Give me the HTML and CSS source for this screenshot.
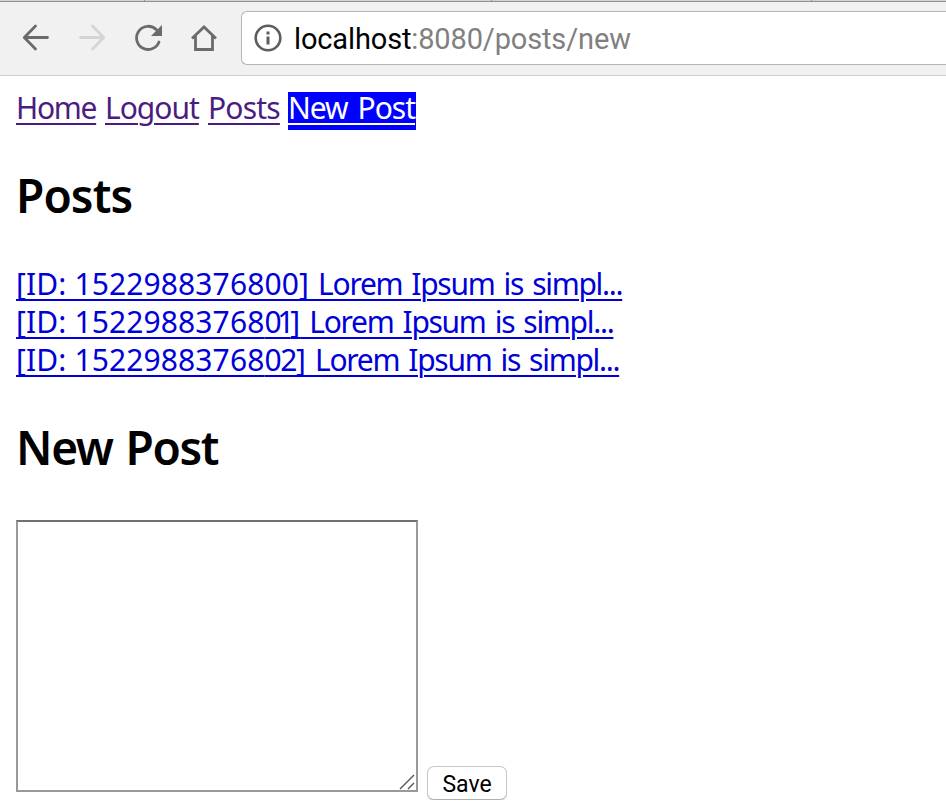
FILE: index.html
```html
<!DOCTYPE html>
<html lang="en">
<head>
<meta charset="utf-8">
<title>New Post</title>
<link rel="stylesheet" href="styles.css">
</head>
<body>
<header class="toolbar">
  <div class="tabs-edge"><i></i><i></i><i></i></div>
  <div class="bar">
    <svg class="controls" width="240" height="73" viewBox="0 2 240 73" fill="none" stroke="#6b6b6b" stroke-width="2.8" stroke-linecap="round" stroke-linejoin="round">
      <path d="M47.5 37.5H24.5M35.5 26L24.3 37.5L35.5 49"/>
      <path stroke="#d5d5d5" d="M80.5 37.5H103.500M92.500 26L103.700 37.500L92.500 49"/>
      <path d="M159 42A11.600 11.600 0 1 1 156.500 29.800"/>
      <path fill="#6b6b6b" stroke="none" d="M162 25V36H151Z"/>
      <path stroke-linecap="butt" stroke-linejoin="miter" d="M192 38.500L204 27L216 38.500M195.500 36V49.500H212.500V36"/>
    </svg>
    <div class="address">
      <svg width="28" height="28" viewBox="0 0 28 28" fill="none" stroke="#5d5d5d">
        <circle cx="14" cy="14" r="12.300" stroke-width="2.600"/>
        <path stroke-width="3" d="M14 7.500V10.500M14 12.500V20.500"/>
      </svg>
      <span class="url"><b>localhost</b>:8080/posts/new</span>
    </div>
  </div>
</header>
<main>
  <nav><a class="home" href="#">Home</a><a class="logout" href="#">Logout</a><a class="posts" href="#">Posts</a><a class="active" href="#">New Post</a></nav>
  <h2 class="posts-title">Posts</h2>
  <div class="list">
    <a href="#"><span class="id">[ID: 1522988376800]</span> Lorem Ipsum is simpl...</a>
    <a href="#"><span class="id">[ID: 15229883768<span class="one">01</span>]</span> Lorem Ipsum is simpl...</a>
    <a href="#"><span class="id">[ID: 15229883768<span class="two">02</span>]</span> Lorem Ipsum is simpl...</a>
  </div>
  <h2 class="new-title">New Post</h2>
  <form>
    <div class="editor">
      <textarea aria-label="Post"></textarea>
      <svg class="grip" width="16" height="16" viewBox="0 0 16 16" stroke="#555" stroke-width="1.400"><path d="M1 15L15 1M9 15L15 9"/></svg>
    </div>
    <button type="button">Save</button>
  </form>
</main>
</body>
</html>
```
FILE: styles.css
```css
* { box-sizing: border-box; }
body { margin: 0; background: #fff; color: #000; font: 30px/38px "Noto Sans", sans-serif; overflow: hidden; }
.toolbar { height: 76px; background: #f1f1f1; border-bottom: 1px solid #cfcfcf; }
.tabs-edge { height: 2px; background: #d2d2d2; border-bottom: 1px solid #929292; display: grid; grid-template-columns: 145px 347px 320px; }
.tabs-edge i { border-right: 1px solid #929292; }
.bar { display: flex; height: 73px; }
.controls { flex: none; display: block; }
.address { flex: 1; height: 54px; margin: 9px 0 0 1px; border: 1px solid #b5b5b5; border-right: 0; border-radius: 6px 0 0 6px; background: #fff; display: flex; align-items: center; padding-left: 12px; }
.address svg { flex: none; }
.url { margin-left: 12px; padding-top: 3px; font: 29px/49px Roboto, sans-serif; color: #808080; white-space: nowrap; letter-spacing: -0.14px; }
.url b { font-weight: 400; color: #000; }
main { padding: 16px 16px 0; }
a { color: #0000d8; text-decoration: underline; text-decoration-thickness: 2px; text-underline-offset: 4px; white-space: nowrap; }
nav { display: flex; height: 38px; }
nav a { color: #4b1d80; letter-spacing: -1.3px; line-height: 32px; }
nav .home { width: 89px; }
nav .logout { width: 103px; letter-spacing: -1px; }
nav .posts { width: 80px; letter-spacing: -0.8px; }
nav .active { width: 128px; background: #00f; color: #fff; letter-spacing: -1px; word-spacing: 3px; }
h2 { margin: 0; font-size: 46px; line-height: 60px; font-weight: 600; letter-spacing: -1.3px; word-spacing: 2px; }
.posts-title { margin-top: 35px; letter-spacing: -0.9px; }
.list { margin-top: 40px; display: flex; flex-direction: column; align-items: flex-start; }
.list a { letter-spacing: -1.3px; word-spacing: 2.6px; text-decoration: none; }
.list a { text-decoration: underline 2px; }
.list .id { letter-spacing: 0.12px; word-spacing: 0; }
.list a, .list .id { text-underline-offset: 4px; }
.list .one { letter-spacing: -4.3px; }
.list .two { letter-spacing: -1.4px; }
.new-title { margin-top: 38px; }
form { display: flex; align-items: flex-start; margin-top: 43px; }
.editor { position: relative; width: 402px; height: 272px; }
textarea { display: block; width: 402px; height: 272px; border: 2px solid #999; border-top-color: #707070; border-radius: 0; resize: none; background: #fff; outline: 0; }
.grip { position: absolute; right: 3px; bottom: 2px; }
button { width: 80px; height: 34px; margin: 246px 0 0 9px; padding: 3px 0 0; border: 1px solid #c8c8c8; border-bottom-color: #b0b0b0; border-radius: 7px; background: #fff; color: #000; box-shadow: 0 1px 1px #ddd; font: 23px/29px Roboto, sans-serif; }
.list .id { text-decoration-skip-ink: none; }
```
